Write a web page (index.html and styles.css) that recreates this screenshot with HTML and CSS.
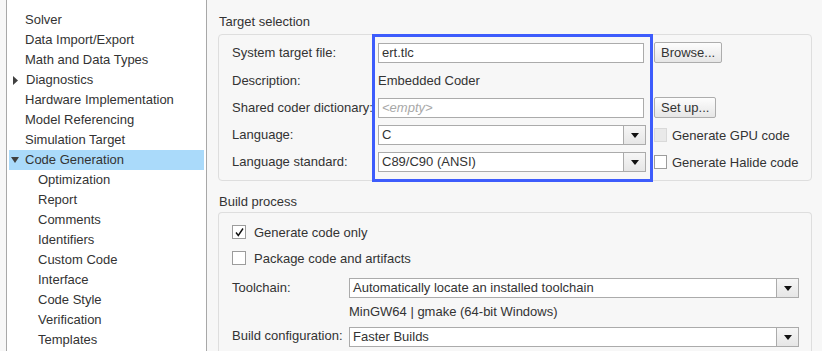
FILE: index.html
```html
<!DOCTYPE html>
<html>
<head>
<meta charset="utf-8">
<link rel="stylesheet" href="styles.css">
</head>
<body>
<div class="tree">
  <ul class="tree-list">
    <li class="node">Solver</li>
    <li class="node">Data Import/Export</li>
    <li class="node">Math and Data Types</li>
    <li class="node has-toggle"><svg class="toggle toggle-right" width="6" height="9" viewBox="0 0 6 9"><path d="M0 0 L5 4.5 L0 9 Z" fill="#404040"/></svg>Diagnostics</li>
    <li class="node">Hardware Implementation</li>
    <li class="node">Model Referencing</li>
    <li class="node">Simulation Target</li>
    <li class="node has-toggle selected"><svg class="toggle toggle-down" width="8" height="6" viewBox="0 0 8 6"><path d="M0 0 L8 0 L4 6 Z" fill="#404040"/></svg>Code Generation</li>
    <li class="node child">Optimization</li>
    <li class="node child">Report</li>
    <li class="node child">Comments</li>
    <li class="node child">Identifiers</li>
    <li class="node child">Custom Code</li>
    <li class="node child">Interface</li>
    <li class="node child">Code Style</li>
    <li class="node child">Verification</li>
    <li class="node child">Templates</li>
  </ul>
</div>
<div class="pane">
  <div class="group-title">Target selection</div>
  <div class="group target">
    <div class="label">System target file:</div>
    <div class="field"><div class="textbox">ert.tlc</div></div>
    <div class="extra"><div class="btn">Browse...</div></div>

    <div class="label desc">Description:</div>
    <div class="field desc">Embedded Coder</div>
    <div class="extra"></div>

    <div class="label">Shared coder dictionary:</div>
    <div class="field"><div class="textbox placeholder">&lt;empty&gt;</div></div>
    <div class="extra"><div class="btn">Set up...</div></div>

    <div class="label">Language:</div>
    <div class="field"><div class="select"><span class="select-text">C</span><span class="select-btn"><svg width="8" height="5" viewBox="0 0 8 5"><path d="M0 0 L8 0 L4 5 Z" fill="#111"/></svg></span></div></div>
    <div class="extra"><span class="check disabled"></span><span class="check-label">Generate GPU code</span></div>

    <div class="label">Language standard:</div>
    <div class="field"><div class="select"><span class="select-text">C89/C90 (ANSI)</span><span class="select-btn"><svg width="8" height="5" viewBox="0 0 8 5"><path d="M0 0 L8 0 L4 5 Z" fill="#111"/></svg></span></div></div>
    <div class="extra"><span class="check"></span><span class="check-label">Generate Halide code</span></div>

    <div class="highlight"></div>
  </div>

  <div class="group-title second">Build process</div>
  <div class="group build">
    <div class="check-row"><span class="check"><svg width="11" height="11" viewBox="0 0 11 11"><path d="M2 5.5 L4.3 8.5 L9 1.5" fill="none" stroke="#111" stroke-width="1.4"/></svg></span><span class="check-label">Generate code only</span></div>
    <div class="check-row second-check"><span class="check"></span><span class="check-label">Package code and artifacts</span></div>
    <div class="build-grid">
      <div class="label">Toolchain:</div>
      <div class="select"><span class="select-text">Automatically locate an installed toolchain</span><span class="select-btn"><svg width="8" height="5" viewBox="0 0 8 5"><path d="M0 0 L8 0 L4 5 Z" fill="#111"/></svg></span></div>
      <div></div>
      <div class="note">MinGW64 | gmake (64-bit Windows)</div>
      <div class="label">Build configuration:</div>
      <div class="select last-select"><span class="select-text">Faster Builds</span><span class="select-btn"><svg width="8" height="5" viewBox="0 0 8 5"><path d="M0 0 L8 0 L4 5 Z" fill="#111"/></svg></span></div>
    </div>
  </div>
</div>
</body>
</html>
```

FILE: styles.css
```css
* { box-sizing: border-box; }

html, body {
  margin: 0;
  height: 100%;
  overflow: hidden;
}

body {
  background: #f7f7f7;
  font-family: "Liberation Sans", Arial, sans-serif;
  font-size: 13px;
  color: #333;
  display: flex;
  align-items: stretch;
}

.tree {
  margin-left: 6px;
  width: 201px;
  height: 100%;
  background: #fff;
  border-left: 1px solid #a8a8a8;
  border-right: 1px solid #a8a8a8;
  padding: 10px 2px 0 2px;
  flex: none;
}

.tree-list {
  list-style: none;
  margin: 0;
  padding: 0;
}

.node {
  height: 20px;
  line-height: 20px;
  padding-left: 16px;
  white-space: nowrap;
  display: flex;
  align-items: center;
}

.node.has-toggle { padding-left: 3px; }
.toggle { flex: none; }
.toggle-down { margin-right: 6px; margin-left: -1px; }
.toggle-right { margin-right: 7px; margin-left: 1px; }

.node.selected { background: #aadafa; }
.node.child { padding-left: 29px; }

.pane {
  flex: 1;
  min-width: 0;
  padding: 14px 10px 0 11px;
  display: flex;
  flex-direction: column;
}

.group-title {
  height: 16px;
  line-height: 16px;
  padding-left: 1px;
  margin-bottom: 4px;
}

.group-title.second {
  margin-top: 13px;
  margin-bottom: 2px;
}

.group {
  border: 1px solid #dedede;
  border-radius: 4px;
  position: relative;
}

.target {
  display: grid;
  grid-template-columns: 138px 268px minmax(0, 1fr);
  grid-template-rows: 20px 21px 20px 20px 20px;
  row-gap: 7px;
  column-gap: 8px;
  padding: 8px 12px 8px 13px;
}

.label {
  line-height: 20px;
  white-space: nowrap;
}

.label.desc, .field.desc { line-height: 21px; }

.field { position: relative; }

.textbox {
  width: 266px;
  height: 20px;
  line-height: 18px;
  border: 1px solid #ababab;
  background: #fff;
  padding-left: 3px;
}

.textbox.placeholder {
  color: #a8a8a8;
  font-style: italic;
}

.extra {
  display: flex;
  align-items: center;
}

.btn {
  height: 21px;
  margin-top: -1px;
  line-height: 19px;
  padding: 0 6px;
  border: 1px solid #adadad;
  border-radius: 2px;
  background: linear-gradient(#fdfdfd, #e6e6e6);
  color: #333;
}

.select {
  height: 20px;
  border: 1px solid #ababab;
  background: #fff;
  display: flex;
}

.select-text {
  flex: 1;
  line-height: 18px;
  padding-left: 3px;
  white-space: nowrap;
}

.select-btn {
  width: 22px;
  border-left: 1px solid #ababab;
  background: linear-gradient(#f6f6f6, #e6e6e6);
  display: flex;
  align-items: center;
  justify-content: center;
}

.check {
  width: 13px;
  height: 14px;
  border: 1px solid #9c9c9c;
  background: #fff;
  flex: none;
  display: flex;
  align-items: center;
  justify-content: center;
}

.check.disabled {
  background: #e9e9e9;
  border-color: #d9d9d9;
}

.check-label {
  margin-left: 5px;
  white-space: nowrap;
}

.highlight {
  position: absolute;
  left: 153px;
  top: -1px;
  width: 281px;
  height: 148px;
  border: 3px solid #3d5cfc;
  pointer-events: none;
}

.build {
  padding: 9px 12px 0 13px;
  flex: 1;
  border-bottom: none;
  border-bottom-left-radius: 0;
  border-bottom-right-radius: 0;
}

.check-row {
  height: 20px;
  display: flex;
  align-items: center;
}

.check-row .check { width: 14px; height: 14px; }
.check-row .check-label { margin-left: 8px; }

.second-check { margin-top: 6px; }

.build-grid {
  margin-top: 10px;
  display: grid;
  grid-template-columns: 117px minmax(0, 1fr);
  grid-template-rows: 20px 20px 20px;
  row-gap: 4px;
}

.note {
  line-height: 20px;
  white-space: nowrap;
}

.last-select { margin-top: 1px; }
```
